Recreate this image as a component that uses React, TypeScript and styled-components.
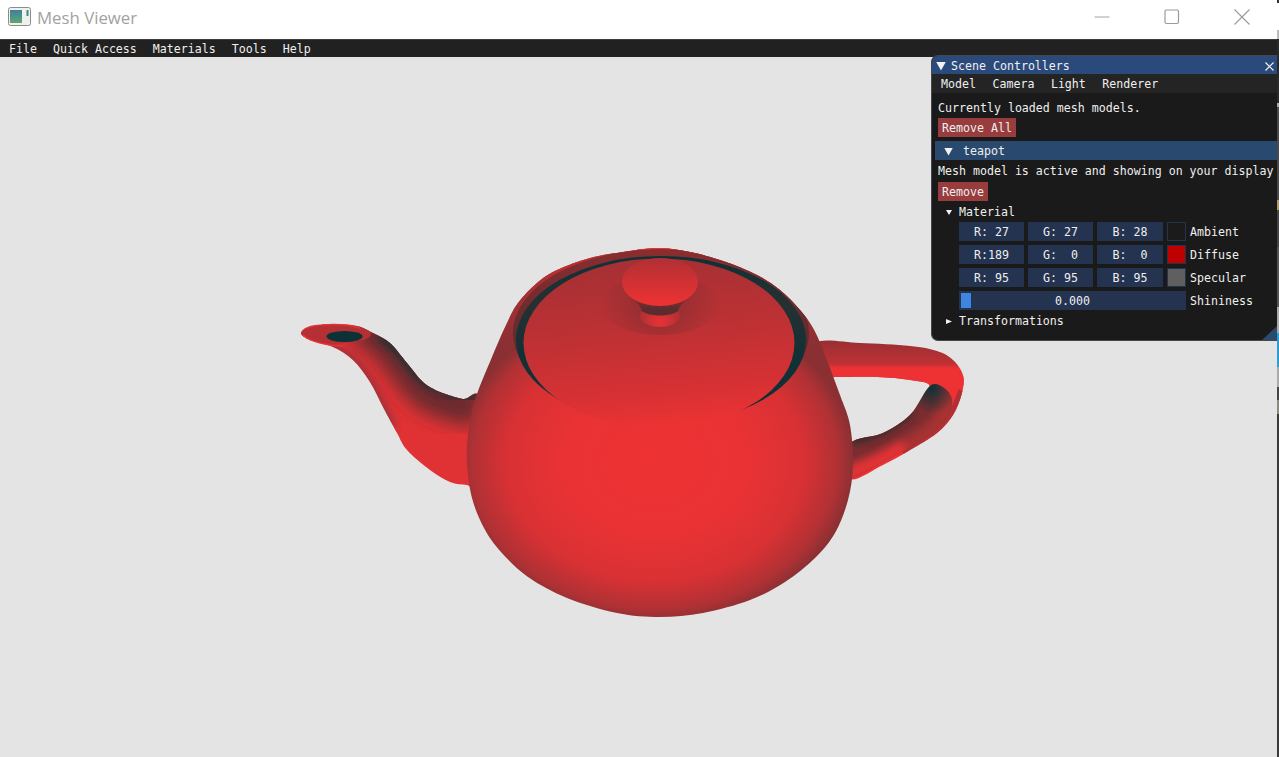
import React from "react";
import styled, { createGlobalStyle } from "styled-components";

const GlobalStyle = createGlobalStyle`
  html, body {
    margin: 0;
    padding: 0;
    background: #e4e4e4;
  }
`;

const Page = styled.div`
  display: flex;
  position: relative;
  width: 1279px;
  height: 757px;
  overflow: hidden;
`;

const Main = styled.div`
  display: flex;
  flex-direction: column;
  flex: 1;
  min-width: 0;
`;

// sliver of the desktop that shows past the window edge
const DesktopEdge = styled.div`
  width: 2px;
  background: linear-gradient(
    to bottom,
    #333 0 3px,
    #fff 3px 30px,
    #bbb 30px 39px,
    #2a2a2a 39px 103px,
    #aaa 103px 107px,
    #4a4a4a 107px 200px,
    #b09a70 200px 210px,
    #444 210px 247px,
    #555 247px 307px,
    #aaa 307px 333px,
    #2a9fd0 333px 367px,
    #aaa 367px 387px,
    #444 387px 400px,
    #8a8a80 400px 414px,
    #3a3a3a 414px 757px
  );
`;

const TitleBar = styled.div`
  display: flex;
  align-items: center;
  height: 39px;
  flex: none;
  background: #fff;
  padding-left: 8px;
`;

const AppIcon = styled.svg`
  margin-bottom: 6px;
`;

const AppTitle = styled.span`
  margin-left: 6px;
  font: 16.8px "Open Sans", "Noto Sans", sans-serif;
  color: #a2a2a2;
  position: relative;
  top: -2px;
`;

const WinButtons = styled.div`
  display: flex;
  margin-left: auto;
`;

const WinButton = styled.div`
  display: flex;
  align-items: center;
  justify-content: center;
  width: 70px;
  height: 33px;
  margin-bottom: 6px;
`;

const mono = `"DejaVu Sans Mono", "Liberation Mono", monospace`;

const MenuBar = styled.div`
  display: flex;
  align-items: center;
  box-sizing: border-box;
  flex: none;
  height: 18px;
  padding: 1px 0 0 1px;
  background: #212121;
  border-top: 1px solid #3c3c3c;
  font: 11.62px ${mono};
  color: #f0f0f0;
`;

const MenuItem = styled.span`
  padding: 0 8px;
`;

const Viewport = styled.div`
  flex: 1;
  min-height: 0;
  background: #e4e4e4;
`;

const TeapotSvg = styled.svg`
  display: block;
`;

const Panel = styled.div`
  position: absolute;
  left: 931px;
  top: 55px;
  width: 346px;
  height: 286px;
  box-sizing: border-box;
  display: flex;
  flex-direction: column;
  overflow: hidden;
  background: #1a1a1a;
  border: 1px solid #46464e;
  border-right: none;
  border-radius: 7px 0 0 7px;
  font: 11.62px/15px ${mono};
  color: #efefef;
  white-space: pre;
`;

const PanelTitle = styled.div`
  display: flex;
  align-items: center;
  box-sizing: border-box;
  flex: none;
  height: 18px;
  padding: 2px 0 0 4px;
  background: #2b4a7c;
  gap: 5px;
`;

const PanelClose = styled.svg`
  margin-left: auto;
  margin-right: 3px;
`;

const PanelMenu = styled.div`
  display: flex;
  align-items: center;
  box-sizing: border-box;
  flex: none;
  height: 19px;
  padding: 2px 0 0 1px;
  background: #242424;
`;

const PanelMenuItem = styled.span`
  padding: 0 8.5px 0 8px;
`;

const PanelBody = styled.div`
  display: flex;
  flex-direction: column;
  padding: 8px 0 0 6px;
`;

const Arrow = styled.span<{ $size: number; $dir?: "down" | "right" }>`
  display: block;
  flex: none;
  width: ${(p) => p.$size}px;
  height: ${(p) => p.$size - 1}px;
  background: #f2f2f2;
  clip-path: ${(p) =>
    p.$dir === "right"
      ? "polygon(0 0, 100% 50%, 0 100%)"
      : "polygon(0 0, 100% 0, 50% 100%)"};
`;

const DangerButton = styled.div<{ $top: number }>`
  align-self: flex-start;
  height: 19px;
  line-height: 20px;
  padding: 0 4px;
  margin-top: ${(p) => p.$top}px;
  background: #983c3e;
`;

const TreeHeader = styled.div`
  display: flex;
  align-items: center;
  box-sizing: border-box;
  height: 19px;
  margin: 4px 0 0 -3px;
  padding: 2px 0 0 9px;
  gap: 10px;
  background: #294a6e;
`;

const Line = styled.div`
  margin-top: 4px;
`;

const TreeNode = styled.div<{ $top: number }>`
  display: flex;
  align-items: center;
  height: 15px;
  margin: ${(p) => p.$top}px 0 0 8px;
  gap: 7px;
`;

const ColorRow = styled.div`
  display: flex;
  align-items: center;
  gap: 4px;
  margin: 4px 0 0 21px;

  &:first-of-type {
    margin-top: 2px;
  }
`;

const Cell = styled.div<{ $wide?: boolean }>`
  box-sizing: border-box;
  display: flex;
  justify-content: center;
  width: ${(p) => (p.$wide ? 66 : 65)}px;
  height: 19px;
  line-height: 21px;
  background: #233350;
`;

const Swatch = styled.div<{ $color: string }>`
  box-sizing: border-box;
  width: 19px;
  height: 19px;
  background: ${(p) => p.$color};
  border: 1px solid #233350;
`;

const RowLabel = styled.span`
  height: 19px;
  line-height: 21px;
`;

const Slider = styled.div`
  position: relative;
  display: flex;
  justify-content: center;
  width: 227px;
  height: 19px;
  line-height: 21px;
  background: #233350;
`;

const SliderGrab = styled.div`
  position: absolute;
  left: 2px;
  top: 2px;
  width: 10px;
  height: 15px;
  background: #3d85e0;
`;

const ResizeGrip = styled.div`
  position: absolute;
  right: 0;
  bottom: 0;
  width: 15px;
  height: 14px;
  background: #2a4a6e;
  clip-path: polygon(100% 0, 100% 100%, 0 100%);
`;

type Pt = [number, number];

// catmull-rom through the traced outline points
const smooth = (pts: Pt[], closed = true) => {
  const n = pts.length;
  const at = (i: number) =>
    closed ? pts[(i + n) % n] : pts[Math.max(0, Math.min(n - 1, i))];
  let d = `M${pts[0][0]} ${pts[0][1]}`;
  const last = closed ? n : n - 1;
  for (let i = 0; i < last; i++) {
    const [p0, p1, p2, p3] = [at(i - 1), at(i), at(i + 1), at(i + 2)];
    const c1 = [p1[0] + (p2[0] - p0[0]) / 6, p1[1] + (p2[1] - p0[1]) / 6];
    const c2 = [p2[0] - (p3[0] - p1[0]) / 6, p2[1] - (p3[1] - p1[1]) / 6];
    d += `C${c1[0]} ${c1[1]} ${c2[0]} ${c2[1]} ${p2[0]} ${p2[1]}`;
  }
  return closed ? d + "Z" : d;
};

const bodyPts: Pt[] = [
  [658, 248], [690, 252], [723, 261], [757, 275], [780, 290], [800, 310], [813, 328], [823, 350],
  [840, 395], [850, 425], [853, 465], [848, 500], [835, 533], [815, 558], [785, 582], [750, 600], [703, 613],
  [660, 617], [617, 613], [567, 598], [528, 577], [501, 552], [484, 528], [472, 498], [467, 463], [468, 435],
  [475, 400], [492, 357], [507, 323], [518, 303], [537, 283], [557, 270], [590, 258], [623, 252],
];

const spoutPts: Pt[] = [
  [301, 333], [310, 326], [333, 324], [357, 326], [373, 333], [390, 343], [407, 363], [423, 382],
  [440, 392], [463, 399], [480, 400], [480, 486], [467, 485], [450, 482], [430, 470], [407, 450],
  [397, 433], [383, 407], [370, 382], [353, 360], [333, 347], [310, 340],
];

const handlePts: Pt[] = [
  [815, 343], [860, 343], [910, 346], [937, 351], [953, 360], [963, 375], [962, 393], [953, 415],
  [937, 433], [910, 450], [883, 465], [850, 479], [850, 444], [883, 433], [910, 415], [930, 387],
  [910, 380], [877, 377], [837, 377], [815, 375],
];

const handleUnderPts: Pt[] = [
  [850, 444], [883, 433], [910, 415], [930, 386], [944, 388], [952, 400], [948, 416], [935, 430],
  [910, 447], [883, 462], [850, 477],
];

const Teapot = () => (
  <TeapotSvg width={1277} height={700} viewBox="0 57 1277 700">
    <defs>
      <radialGradient
        id="body"
        gradientUnits="userSpaceOnUse"
        cx="0"
        cy="0"
        r="1"
        gradientTransform="translate(655 462) scale(199 160)"
      >
        <stop offset="0" stopColor="#ee3233" />
        <stop offset="0.45" stopColor="#ea3234" />
        <stop offset="0.75" stopColor="#d83134" />
        <stop offset="0.92" stopColor="#b03134" />
        <stop offset="1" stopColor="#8a3033" />
      </radialGradient>
      <linearGradient id="lid" gradientUnits="userSpaceOnUse" x1="650" y1="262" x2="665" y2="428">
        <stop offset="0" stopColor="#a63034" />
        <stop offset="0.45" stopColor="#c03134" />
        <stop offset="0.8" stopColor="#d83134" />
        <stop offset="1" stopColor="#ee3233" />
      </linearGradient>
      <linearGradient id="rim" gradientUnits="userSpaceOnUse" x1="660" y1="250" x2="660" y2="345">
        <stop offset="0" stopColor="#c53034" />
        <stop offset="0.5" stopColor="#a52f33" />
        <stop offset="1" stopColor="#a52f33" stopOpacity="0" />
      </linearGradient>
      <linearGradient id="ring" gradientUnits="userSpaceOnUse" x1="660" y1="256" x2="660" y2="420">
        <stop offset="0" stopColor="#0c3236" />
        <stop offset="0.3" stopColor="#263031" />
        <stop offset="0.6" stopColor="#123135" />
        <stop offset="1" stopColor="#0c3236" />
      </linearGradient>
      <linearGradient id="ringOuter" gradientUnits="userSpaceOnUse" x1="660" y1="250" x2="660" y2="380">
        <stop offset="0" stopColor="#8a2d30" />
        <stop offset="1" stopColor="#4a2b2d" />
      </linearGradient>
      <linearGradient id="handle" gradientUnits="userSpaceOnUse" x1="860" y1="343" x2="860" y2="378">
        <stop offset="0" stopColor="#9c2f33" />
        <stop offset="0.6" stopColor="#c03134" />
        <stop offset="0.72" stopColor="#ee3234" />
        <stop offset="1" stopColor="#ee3234" />
      </linearGradient>
      <radialGradient id="handleDark" gradientUnits="userSpaceOnUse" cx="932" cy="388" r="26">
        <stop offset="0" stopColor="#0c3236" />
        <stop offset="1" stopColor="#0c3236" stopOpacity="0" />
      </radialGradient>
      <linearGradient id="knob" gradientUnits="userSpaceOnUse" x1="660" y1="260" x2="660" y2="305">
        <stop offset="0" stopColor="#b33034" />
        <stop offset="1" stopColor="#ee3233" />
      </linearGradient>
      <linearGradient id="knobSide" gradientUnits="userSpaceOnUse" x1="660" y1="288" x2="660" y2="316">
        <stop offset="0" stopColor="#b53034" />
        <stop offset="0.75" stopColor="#5a2c2e" />
        <stop offset="1" stopColor="#5a2c2e" />
      </linearGradient>
      <radialGradient id="neck" gradientUnits="userSpaceOnUse" cx="660" cy="322" r="22">
        <stop offset="0" stopColor="#e83234" />
        <stop offset="0.5" stopColor="#cc3134" />
        <stop offset="1" stopColor="#a83033" />
      </radialGradient>
      <radialGradient id="knobShadow" gradientUnits="userSpaceOnUse" cx="660" cy="305" r="60">
        <stop offset="0" stopColor="#6e2c2f" stopOpacity="0.6" />
        <stop offset="1" stopColor="#6e2c2f" stopOpacity="0" />
      </radialGradient>
      <filter id="soft4" x="-30%" y="-30%" width="160%" height="160%">
        <feGaussianBlur stdDeviation="4" />
      </filter>
      <filter id="soft9" x="-30%" y="-30%" width="160%" height="160%">
        <feGaussianBlur stdDeviation="9" />
      </filter>
      <clipPath id="bodyClip">
        <path d={smooth(bodyPts)} />
      </clipPath>
      <clipPath id="spoutClip">
        <path d={smooth(spoutPts)} />
      </clipPath>
      <clipPath id="handleClip">
        <path d={smooth(handlePts)} />
      </clipPath>
      <clipPath id="underClip">
        <path d={smooth(handleUnderPts)} />
      </clipPath>
    </defs>

    <path d={smooth(handlePts)} fill="url(#handle)" />
    <g clipPath="url(#handleClip)">
      <path
        d={smooth([[825, 372], [880, 375], [925, 381], [950, 384], [965, 380]], false)}
        fill="none"
        stroke="#ec3234"
        strokeWidth="9"
      />
      <path
        d={smooth([[966, 392], [955, 418], [938, 436], [905, 456]], false)}
        fill="none"
        stroke="#b03034"
        strokeWidth="16"
      />
    </g>
    <path d={smooth(handleUnderPts)} fill="#7a2d30" />
    <g clipPath="url(#underClip)">
      <path
        d={smooth([[845, 480], [883, 463], [910, 448], [937, 430], [952, 404], [945, 385]], false)}
        fill="none"
        stroke="#a83033"
        strokeWidth="24"
        filter="url(#soft4)"
      />
      <path
        d={smooth([[845, 476], [883, 459], [905, 447]], false)}
        fill="none"
        stroke="#e83234"
        strokeWidth="13"
        filter="url(#soft4)"
      />
      <path
        d={smooth([[850, 439], [883, 428], [910, 410]], false)}
        fill="none"
        stroke="#26292c"
        strokeWidth="11"
        filter="url(#soft4)"
      />
      <circle cx="932" cy="388" r="26" fill="url(#handleDark)" />
    </g>

    <path d={smooth(spoutPts)} fill="#e03234" />
    <g clipPath="url(#spoutClip)">
      <path
        d={smooth([[360, 322], [385, 340], [405, 364], [423, 386], [442, 398], [480, 408]], false)}
        fill="none"
        stroke="#6a2c2f"
        strokeWidth="40"
        filter="url(#soft9)"
      />
      <path
        d={smooth([[380, 336], [395, 346], [409, 362], [425, 380], [443, 388]], false)}
        fill="none"
        stroke="#0c3236"
        strokeWidth="8"
        filter="url(#soft4)"
      />
      <path
        d={smooth([[443, 392], [463, 397], [480, 398]], false)}
        fill="none"
        stroke="#3a2b2d"
        strokeWidth="10"
        filter="url(#soft4)"
      />
      <path
        d={smooth([[300, 340], [335, 350], [358, 366], [375, 392], [392, 428]], false)}
        fill="none"
        stroke="#98303a"
        strokeWidth="9"
        filter="url(#soft4)"
      />
      <ellipse cx="336" cy="334" rx="35" ry="9.5" fill="#b43034" />
    </g>
    <path d="M303 335C310 342 328 346 345 346" fill="none" stroke="#ee3233" strokeWidth="1.2" />
    <path d="M322 325C335 324 350 325 360 328" fill="none" stroke="#e23234" strokeWidth="1.5" />
    <ellipse cx="344.5" cy="336.5" rx="18" ry="5.5" fill="#0c3236" />

    <path d={smooth(bodyPts)} fill="url(#body)" />
    <g clipPath="url(#bodyClip)">
      <ellipse cx="660" cy="330" rx="190" ry="85" fill="url(#rim)" />
      <path d="M600 252C630 247 690 247 730 258" fill="none" stroke="#ee3233" strokeWidth="5" />
      <ellipse cx="661" cy="333" rx="148" ry="84" fill="url(#ringOuter)" />
      <ellipse cx="661" cy="340" rx="145" ry="84" fill="url(#ring)" />
      <ellipse cx="659" cy="343" rx="135.5" ry="84.5" fill="url(#lid)" />
    </g>

    <ellipse cx="660" cy="305" rx="60" ry="30" fill="url(#knobShadow)" />
    <ellipse cx="660" cy="316" rx="20" ry="11" fill="url(#neck)" />
    <path
      d="M622 285C626 296 640 302 642 311C650 317 670 317 678 311C680 302 694 296 698 285Z"
      fill="url(#knobSide)"
    />
    <ellipse cx="660" cy="282" rx="38" ry="24" fill="url(#knob)" />
  </TeapotSvg>
);

const materials = [
  { label: "Ambient", color: "#1b1b1c", values: ["R: 27", "G: 27", "B: 28"] },
  { label: "Diffuse", color: "#bd0000", values: ["R:189", "G:  0", "B:  0"] },
  { label: "Specular", color: "#5f5f5f", values: ["R: 95", "G: 95", "B: 95"] },
];

function App() {
  return (
    <Page>
      <GlobalStyle />
      <Main>
        <TitleBar>
          <AppIcon width="23" height="19" viewBox="0 0 23 19">
            <defs>
              <linearGradient id="appIcon" x1="0" y1="0" x2="0" y2="1">
                <stop offset="0" stopColor="#3f7f9f" />
                <stop offset="1" stopColor="#5fa870" />
              </linearGradient>
            </defs>
            <rect x="0.5" y="0.5" width="22" height="18" rx="2" fill="#eef1ee" stroke="#8c8c8c" />
            <rect x="2" y="3" width="12" height="13" fill="url(#appIcon)" />
            <rect x="18.5" y="3" width="2" height="6" fill="#3f8a7c" />
          </AppIcon>
          <AppTitle>Mesh Viewer</AppTitle>
          <WinButtons>
            <WinButton>
              <svg width="16" height="16" viewBox="0 0 16 16">
                <path d="M0.5 8H15.5" stroke="#a4a4a4" strokeWidth="1" />
              </svg>
            </WinButton>
            <WinButton>
              <svg width="16" height="16" viewBox="0 0 16 16">
                <rect x="1" y="1" width="13.5" height="13.5" rx="1.5" fill="none" stroke="#9a9a9a" strokeWidth="1.2" />
              </svg>
            </WinButton>
            <WinButton>
              <svg width="16" height="16" viewBox="0 0 16 16">
                <path d="M0.5 0.5L15.5 15.5M15.5 0.5L0.5 15.5" stroke="#9a9a9a" strokeWidth="1.1" />
              </svg>
            </WinButton>
          </WinButtons>
        </TitleBar>
        <MenuBar>
          {["File", "Quick Access", "Materials", "Tools", "Help"].map((m) => (
            <MenuItem key={m}>{m}</MenuItem>
          ))}
        </MenuBar>
        <Viewport>
          <Teapot />
        </Viewport>
      </Main>
      <DesktopEdge />

      <Panel>
        <PanelTitle>
          <Arrow $size={10} />
          <span>Scene Controllers</span>
          <PanelClose width="9" height="9" viewBox="0 0 9 9">
            <path d="M0.5 0.5L8.5 8.5M8.5 0.5L0.5 8.5" stroke="#f0f0f0" strokeWidth="1.2" />
          </PanelClose>
        </PanelTitle>
        <PanelMenu>
          {["Model", "Camera", "Light", "Renderer"].map((m) => (
            <PanelMenuItem key={m}>{m}</PanelMenuItem>
          ))}
        </PanelMenu>
        <PanelBody>
          <div>Currently loaded mesh models.</div>
          <DangerButton $top={2}>Remove All</DangerButton>
          <TreeHeader>
            <Arrow $size={9} />
            <span>teapot</span>
          </TreeHeader>
          <Line>Mesh model is active and showing on your display</Line>
          <DangerButton $top={3}>Remove</DangerButton>
          <TreeNode $top={4}>
            <Arrow $size={6} />
            <span>Material</span>
          </TreeNode>
          <div>
            {materials.map((m) => (
              <ColorRow key={m.label}>
                {m.values.map((v, i) => (
                  <Cell key={v} $wide={i === 2}>
                    {v}
                  </Cell>
                ))}
                <Swatch $color={m.color} />
                <RowLabel>{m.label}</RowLabel>
              </ColorRow>
            ))}
            <ColorRow>
              <Slider>
                <SliderGrab />
                0.000
              </Slider>
              <RowLabel>Shininess</RowLabel>
            </ColorRow>
          </div>
          <TreeNode $top={4}>
            <Arrow $size={6} $dir="right" />
            <span>Transformations</span>
          </TreeNode>
        </PanelBody>
        <ResizeGrip />
      </Panel>
    </Page>
  );
}

export default App;
